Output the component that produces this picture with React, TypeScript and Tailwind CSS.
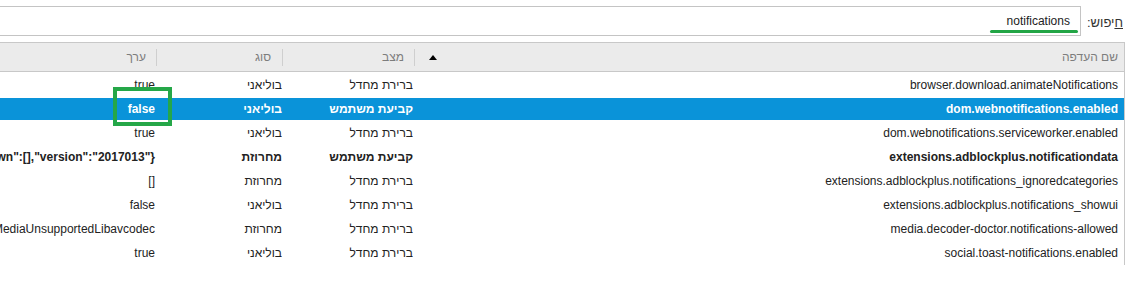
import type { ReactElement } from 'react'

interface Pref {
  name: string
  status: string
  type: string
  value: string
  user?: boolean
  selected?: boolean
}

const prefs: Pref[] = [
  { name: 'browser.download.animateNotifications', status: 'ברירת מחדל', type: 'בוליאני', value: 'true' },
  { name: 'dom.webnotifications.enabled', status: 'קביעת משתמש', type: 'בוליאני', value: 'false', user: true, selected: true },
  { name: 'dom.webnotifications.serviceworker.enabled', status: 'ברירת מחדל', type: 'בוליאני', value: 'true' },
  {
    name: 'extensions.adblockplus.notificationdata',
    status: 'קביעת משתמש',
    type: 'מחרוזת',
    value: '{"notifications":[],"shown":[],"version":"2017013"}',
    user: true,
  },
  { name: 'extensions.adblockplus.notifications_ignoredcategories', status: 'ברירת מחדל', type: 'מחרוזת', value: '[]' },
  { name: 'extensions.adblockplus.notifications_showui', status: 'ברירת מחדל', type: 'בוליאני', value: 'false' },
  {
    name: 'media.decoder-doctor.notifications-allowed',
    status: 'ברירת מחדל',
    type: 'מחרוזת',
    value: 'MediaWMFNeeded,MediaWidevineNoWMF,MediaCannotInitializePulseAudio,MediaCannotPlayNoDecoders,MediaUnsupportedLibavcodec',
  },
  { name: 'social.toast-notifications.enabled', status: 'ברירת מחדל', type: 'בוליאני', value: 'true' },
]

function HeaderSep(): ReactElement {
  return <div className="h-[17px] w-px bg-[#cfcfcf]" />
}

function PrefRow({ pref }: { pref: Pref }): ReactElement {
  const tone = pref.selected ? 'bg-[#0a93d9] text-white' : 'text-[#222]'
  const weight = pref.user ? 'font-bold' : ''
  return (
    <div className="h-[24px] py-px">
      <div className={`flex h-full items-center ${tone} ${weight}`}>
        <div className="w-[709px] shrink-0 truncate pr-[6px] text-right">{pref.name}</div>
        <div className="w-[132px] shrink-0 whitespace-nowrap pr-[2px] text-right">{pref.status}</div>
        <div className="w-[126px] shrink-0 whitespace-nowrap pr-[1px] text-right">{pref.type}</div>
        <div className="min-w-0 flex-1 overflow-hidden whitespace-nowrap pr-[2px] text-right">
          <span dir="ltr">{pref.value}</span>
        </div>
      </div>
    </div>
  )
}

export default function App(): ReactElement {
  return (
    <div
      dir="rtl"
      className="relative h-[300px] w-[1128px] overflow-hidden bg-white text-[12px] text-[#222]"
      style={{ fontFamily: '"Liberation Sans", Arial, sans-serif' }}
    >
      <div className="flex h-[42px] items-start pt-[6px] pr-[5px]">
        <label className="mt-[7px] ml-[6px] whitespace-nowrap text-[13px] text-[#333]">
          <span className="underline">ח</span>יפוש:
        </label>
        <div className="relative flex h-[30px] flex-1 items-center border border-l-0 border-[#c4c4c4] bg-white pr-[10px]">
          <span dir="ltr" className="text-[12px] text-[#222]">notifications</span>
          <div className="absolute top-[23px] right-[2px] h-[3px] w-[88px] rounded-full bg-[#22a545]" />
        </div>
      </div>

      <div className="mr-[3px] border-t border-r border-[#c8c8c8]">
        <div className="flex h-[29px] items-center border-b border-[#c8c8c8] bg-[#ebebeb] text-[#7d7d7d]">
          <div className="flex w-[709px] shrink-0 items-center justify-between pr-[6px]">
            <span>שם העדפה</span>
            <span className="ml-[14px] h-0 w-0 border-x-[4px] border-b-[5px] border-x-transparent border-b-black" />
          </div>
          <div className="flex w-[132px] shrink-0 items-center gap-[10px]">
            <HeaderSep />
            <span>מצב</span>
          </div>
          <div className="flex w-[126px] shrink-0 items-center gap-[11px]">
            <HeaderSep />
            <span>סוג</span>
          </div>
          <div className="flex flex-1 items-center gap-[10px]">
            <HeaderSep />
            <span>ערך</span>
          </div>
        </div>
        <div className="pt-px">
          {prefs.map((p) => (
            <PrefRow key={p.name} pref={p} />
          ))}
        </div>
      </div>

      <div className="absolute top-[87px] left-[113px] h-[39px] w-[59px] border-[4px] border-[#25a748]" />
    </div>
  )
}
